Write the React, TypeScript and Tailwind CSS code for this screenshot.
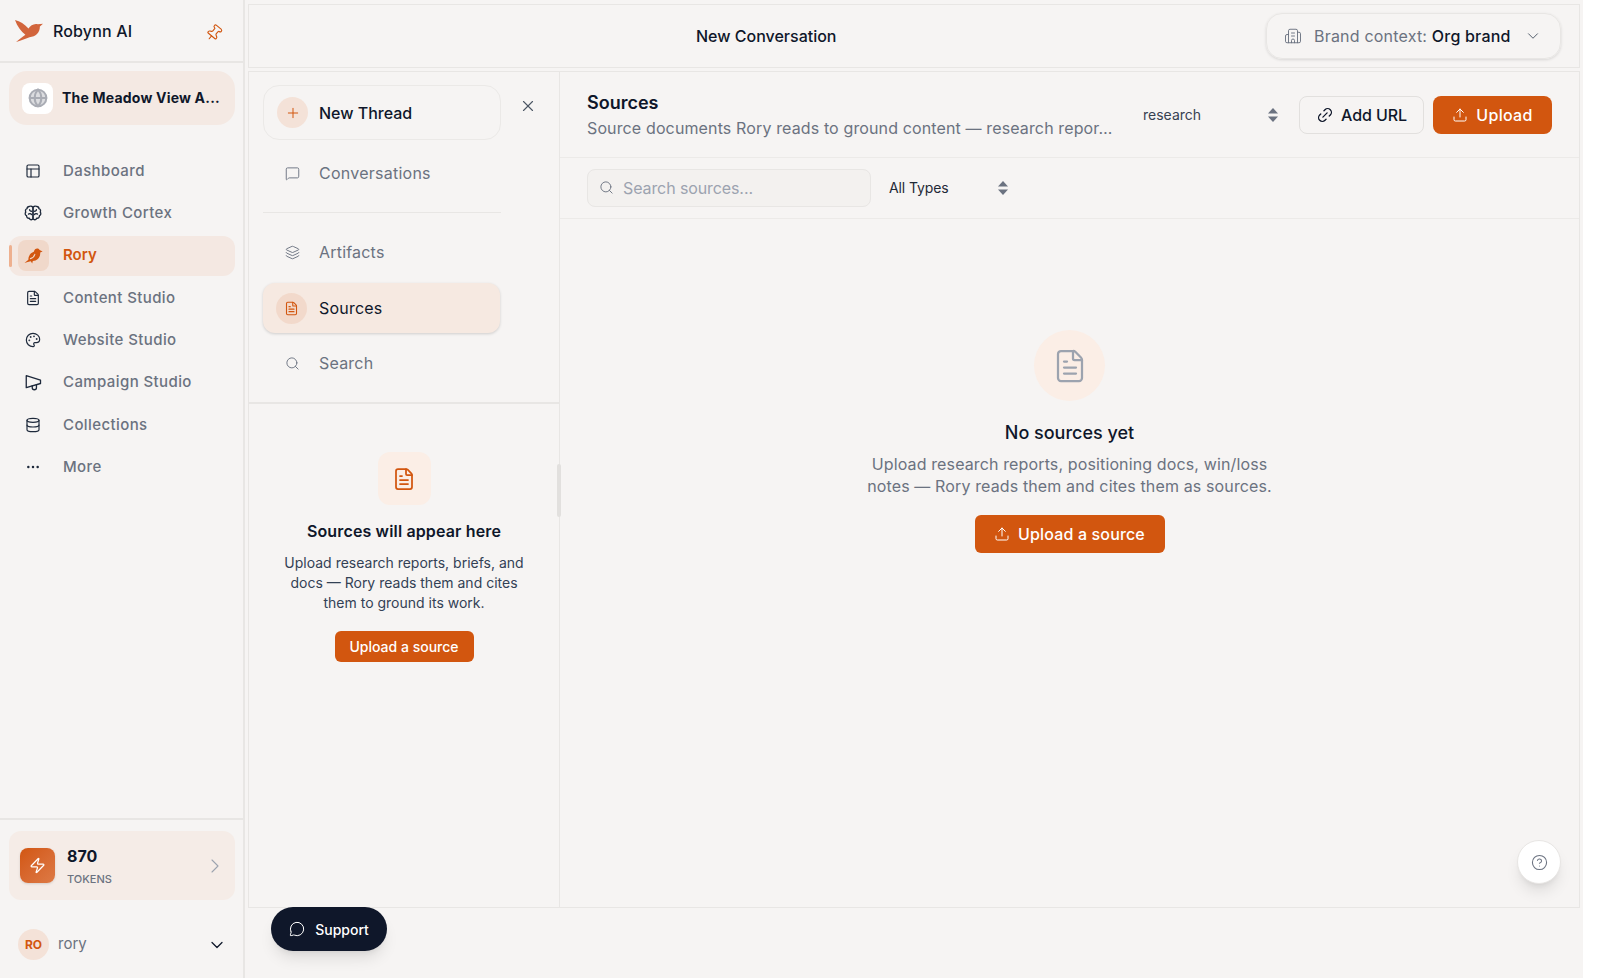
import {
  Building2,
  ChevronDown,
  ChevronRight,
  CircleHelp,
  Database,
  Ellipsis,
  FileText,
  Globe,
  Layers,
  Link2,
  MessageCircle,
  MessageSquare,
  Palette,
  PanelsTopLeft,
  Pin,
  Plus,
  Search,
  Upload,
  X,
  Zap,
} from "lucide-react";

type IconProps = { size?: number; className?: string; strokeWidth?: number };

const BrainIcon = ({ size = 18, className, strokeWidth = 1.75 }: IconProps) => (
  <svg width={size} height={size} viewBox="0 0 24 24" fill="none" stroke="currentColor" strokeWidth={strokeWidth} strokeLinecap="round" strokeLinejoin="round" className={className}>
    <path d="M9.5 3A2.5 2.5 0 0 1 12 5.5v13a2.5 2.5 0 0 1-4.96.44 3 3 0 0 1-3.6-3.3 3 3 0 0 1-1-4.9 3 3 0 0 1 1.6-4.6A3 3 0 0 1 7 3.3 2.5 2.5 0 0 1 9.5 3Z" />
    <path d="M14.5 3A2.5 2.5 0 0 0 12 5.5v13a2.5 2.5 0 0 0 4.96.44 3 3 0 0 0 3.6-3.3 3 3 0 0 0 1-4.9 3 3 0 0 0-1.6-4.6A3 3 0 0 0 17 3.3 2.5 2.5 0 0 0 14.5 3Z" />
    <path d="M7.5 7.5c0 1.4 1.2 2.3 2.5 2.2M16.5 7.5c0 1.4-1.2 2.3-2.5 2.2M6 13.5c1.2-1 3-.8 4 .5M18 13.5c-1.2-1-3-.8-4 .5" />
  </svg>
);

const MegaphoneIcon = ({ size = 18, className, strokeWidth = 1.75 }: IconProps) => (
  <svg width={size} height={size} viewBox="0 0 24 24" fill="none" stroke="currentColor" strokeWidth={strokeWidth} strokeLinecap="round" strokeLinejoin="round" className={className}>
    <path d="M22 9.5 3 3.5v16l19-5.5z" />
    <path d="M11 17v2.5a2.8 2.8 0 0 0 5.6 0V15.5" />
  </svg>
);

const RoryBird = () => (
  <svg width="19" height="17" viewBox="0 0 19 17" className="shrink-0">
    <path
      d="M0.5 16 C2 14.6 3.2 13.6 4.4 12.8 C4.2 9 6.6 5.8 9.8 4.8 C10.4 1.4 14 0.4 15.6 3 L18.6 4.4 L16.2 5.6 C16.6 10.4 13.2 14 8.8 14 L8.2 16.4 L6.8 14.2 C4.8 14.6 2.6 15.4 0.5 16 Z"
      fill="#d2560f"
    />
    <path d="M6.4 11.6 C8.4 11.2 10.2 9.6 10.8 7.4" fill="none" stroke="#f0d8ca" strokeWidth="1.1" strokeLinecap="round" />
  </svg>
);

const navItems = [
  { label: "Dashboard", icon: PanelsTopLeft },
  { label: "Growth Cortex", icon: BrainIcon },
  { label: "Rory", active: true },
  { label: "Content Studio", icon: FileText },
  { label: "Website Studio", icon: Palette },
  { label: "Campaign Studio", icon: MegaphoneIcon },
  { label: "Collections", icon: Database },
  { label: "More", icon: Ellipsis },
];

const SelectArrows = () => (
  <svg width="12" height="16" viewBox="0 0 12 16" className="shrink-0">
    <path d="M6 1 L11 6.6 H1 Z" fill="#6b7280" />
    <path d="M6 15 L11 9.4 H1 Z" fill="#6b7280" />
  </svg>
);

const Logo = () => (
  <svg width="28" height="22" viewBox="0 0 27 21" className="shrink-0">
    <path
      d="M0 0 C5 1 9 4 13 8 C15 5.5 18 3 22 4 L27 3.5 L24 6.2 C24 12 20 16 14 16.5 C10 18 5 20 1 21 C4 18.5 7 16.5 10 14.2 C6 11 2 6 0 0 Z"
      fill="#d2653c"
    />
  </svg>
);

const Sidebar = () => (
  <aside className="flex w-[245px] shrink-0 flex-col border-r-2 border-[#e8e6e4]">
    <div className="flex h-[63px] shrink-0 items-center border-b-2 border-[#e8e6e4] pl-[15px] pr-[20px]">
      <Logo />
      <span className="ml-[10px] flex-1 text-[16px] font-medium tracking-[0.15px] text-[#0f172a]">Robynn AI</span>
      <Pin size={18} className="mt-[4px] rotate-[40deg] text-[#d2560f]" strokeWidth={1.5} />
    </div>

    <div className="ml-[9px] mr-[8px] mt-[8px] flex h-[54px] items-center rounded-[18px] bg-[#f4e9e3] pl-[13px]">
      <div className="flex h-[31px] w-[31px] items-center justify-center rounded-[8px] bg-white">
        <Globe size={20} strokeWidth={2.4} className="fill-[#dcdde0] text-[#a9acb4]" />
      </div>
      <span className="ml-[9px] mb-[2px] text-[14px] font-bold tracking-[0.2px] text-[#0f172a]">The Meadow View A...</span>
    </div>

    <nav className="ml-[9px] mr-[8px] mt-[26px] flex flex-col gap-[2.3px]">
      {navItems.map(({ label, icon: Icon, active }) =>
        active || !Icon ? (
          <div key={label} className="relative flex h-[40px] items-center rounded-xl bg-[#f4e8e2] pl-[9px]">
            <span className="absolute left-0 top-[9px] h-[22px] w-[3px] rounded-full bg-[#eeb08f]" />
            <span className="flex h-[31px] w-[31px] items-center justify-center rounded-lg bg-[#f0d8ca]">
              <RoryBird />
            </span>
            <span className="ml-[14px] text-[15px] font-semibold text-[#d2560f]">{label}</span>
          </div>
        ) : (
          <div key={label} className="flex h-[40px] items-center pl-[16px]">
            <span className="flex w-[16px] items-center justify-center">
              <Icon size={label === "Growth Cortex" || label === "Campaign Studio" ? 18 : 16} className="shrink-0 text-[#1e293b]" strokeWidth={1.75} />
            </span>
            <span className="ml-[22px] text-[15px] font-medium tracking-[0.4px] text-[#6b7280]">{label}</span>
          </div>
        ),
      )}
    </nav>

    <div className="mt-auto border-t-2 border-[#e8e6e4] pl-[9px] pr-[8px] pt-[11px]">
      <div className="flex h-[69px] items-center rounded-xl bg-[#f5ece7] pl-[11px] pr-[8px]">
        <span className="flex h-[35px] w-[35px] items-center justify-center rounded-lg bg-gradient-to-br from-[#d2560f] to-[#dd7a45] shadow-sm">
          <Zap size={17} className="text-white" strokeWidth={1.75} />
        </span>
        <div className="ml-[12px] flex-1">
          <div className="text-[16px] font-bold leading-[22px] text-[#0f172a]">870</div>
          <div className="mt-[5px] text-[11px] font-medium leading-[14px] text-[#6b7280]">TOKENS</div>
        </div>
        <ChevronRight size={24} strokeWidth={1.1} className="text-[#9ca3af]" />
      </div>
      <div className="mb-[18px] mt-[29px] flex items-center pl-[9px] pr-[7px]">
        <span className="flex h-[31px] w-[31px] items-center justify-center rounded-full bg-[#f4e2d8] text-[12px] font-bold text-[#d2560f]">
          RO
        </span>
        <span className="ml-[9px] flex-1 text-[15px] text-[#6b7280]">rory</span>
        <ChevronDown size={20} strokeWidth={1.5} className="mr-[1px] text-[#0f172a]" />
      </div>
    </div>
  </aside>
);

const ThreadPanel = () => (
  <div className="relative flex w-[311px] shrink-0 flex-col border-r border-[#e8e6e4]">
    <div className="flex flex-col pl-[14px] pt-[13px]">
      <div className="flex h-[55px] w-[238px] items-center rounded-2xl border border-[#ebe9e7] pl-[13px]">
        <span className="flex h-[31px] w-[31px] items-center justify-center rounded-full bg-[#f4e2d8]">
          <Plus size={16} strokeWidth={1.5} className="text-[#d2560f]" />
        </span>
        <span className="ml-[11px] text-[16px] font-medium text-[#0f172a]">New Thread</span>
      </div>
      <div className="mt-[8px] flex h-[50px] w-[238px] items-center pl-[22px]">
        <MessageSquare size={15} strokeWidth={1.5} className="text-[#6b7280]" />
        <span className="ml-[19px] text-[16px] tracking-[0.25px] text-[#6b7280]">Conversations</span>
      </div>
      <div className="mt-[14px] h-px w-[238px] bg-[#e8e6e4]" />
      <div className="mt-[14px] flex h-[50px] w-[238px] items-center pl-[22px]">
        <Layers size={15} strokeWidth={1.5} className="text-[#6b7280]" />
        <span className="ml-[19px] text-[16px] tracking-[0.2px] text-[#6b7280]">Artifacts</span>
      </div>
      <div className="mt-[6px] flex h-[50px] w-[237px] items-center rounded-xl bg-[#f6e9e1] pl-[13px] shadow-[0_1px_3px_rgba(0,0,0,0.16)]">
        <span className="flex h-[31px] w-[31px] items-center justify-center rounded-full bg-[#f2d9cb]">
          <FileText size={15} strokeWidth={1.75} className="text-[#d2560f]" />
        </span>
        <span className="ml-[12px] text-[16px] tracking-[0.2px] text-[#0f172a]">Sources</span>
      </div>
      <div className="mt-[5px] flex h-[50px] w-[238px] items-center pl-[22px]">
        <Search size={15} strokeWidth={1.5} className="text-[#6b7280]" />
        <span className="ml-[19px] text-[16px] tracking-[0.2px] text-[#6b7280]">Search</span>
      </div>
    </div>
    <X size={18} strokeWidth={1.5} className="absolute left-[270px] top-[25px] text-[#4b5563]" />

    <div className="mt-[14px] flex flex-1 flex-col items-center border-t-2 border-[#e8e6e4] pt-[48px]">
      <span className="flex h-[53px] w-[53px] items-center justify-center rounded-xl bg-[#fbeee6]">
        <FileText size={24} strokeWidth={1.75} className="text-[#d2560f]" />
      </span>
      <h3 className="mt-[14px] text-[16px] font-semibold leading-[24px] tracking-[0.15px] text-[#0f172a]">Sources will appear here</h3>
      <p className="mt-[10px] w-[250px] text-center text-[14px] leading-[20px] text-[#334155]">
        Upload research reports, briefs, and docs — Rory reads them and cites them to ground its work.
      </p>
      <button className="mt-[18px] h-[31px] w-[139px] rounded-md bg-[#d2560f] text-[14px] font-medium text-white">
        Upload a source
      </button>
    </div>
    <span className="absolute right-[-2px] top-[392px] h-[53px] w-[4px] rounded-full bg-[#e2e0de]" />
  </div>
);

const SourcesPanel = () => (
  <section className="flex flex-1 flex-col">
    <div className="flex h-[86px] items-center border-b border-[#eceae8] pl-[27px] pr-[27px]">
      <div className="w-[535px] shrink-0 pt-[2px]">
        <h2 className="text-[18px] font-semibold leading-[24px] text-[#0f172a]">Sources</h2>
        <p className="mt-[1px] truncate text-[16px] leading-[24px] tracking-[0.13px] text-[#6b7280]">
          Source documents Rory reads to ground content — research repor…
        </p>
      </div>
      <div className="ml-[10px] flex h-[37px] w-[159px] items-center justify-between pl-[11px] pr-[12px]">
        <span className="text-[14px] text-[#374151]">research</span>
        <SelectArrows />
      </div>
      <button className="ml-[8px] flex h-[38px] w-[125px] items-center justify-center gap-[7px] rounded-lg border border-[#e2e0de] text-[16px] font-medium tracking-[-0.1px] text-[#0f172a]">
        <Link2 size={18} strokeWidth={1.75} className="rotate-[-45deg]" />
        Add URL
      </button>
      <button className="ml-[9px] flex h-[38px] w-[119px] items-center justify-center gap-[8px] rounded-lg bg-[#d2560f] text-[16px] font-medium tracking-[0.3px] text-white">
        <Upload size={16} strokeWidth={1.5} />
        Upload
      </button>
    </div>

    <div className="flex h-[61px] items-center border-b border-[#eceae8] pb-[1px] pl-[27px]">
      <div className="flex h-[38px] w-[284px] items-center rounded-lg border border-[#e8e6e4] bg-[#f3f1ef] pl-[11px]">
        <Search size={15} strokeWidth={1.5} className="text-[#6b7280]" />
        <span className="ml-[9px] text-[16px] tracking-[-0.1px] text-[#9ca3af]">Search sources...</span>
      </div>
      <div className="ml-[18px] flex w-[126px] items-center justify-between pr-[6px]">
        <span className="text-[14px] tracking-[-0.1px] text-[#1f2937]">All Types</span>
        <SelectArrows />
      </div>
    </div>

    <div className="flex flex-1 flex-col items-center pt-[111px]">
      <span className="flex h-[71px] w-[71px] items-center justify-center rounded-full bg-[#fbeee6]">
        <FileText size={36} strokeWidth={1.5} className="text-[#9ca3af]" />
      </span>
      <h3 className="mt-[18px] text-[18px] font-medium leading-[28px] text-[#0f172a]">No sources yet</h3>
      <p className="mt-[6px] w-[440px] text-center text-[16px] leading-[22px] tracking-[0.13px] text-[#6b7280]">
        Upload research reports, positioning docs, win/loss<br />notes — Rory reads them and cites them as sources.
      </p>
      <button className="mt-[18px] flex h-[38px] w-[190px] items-center justify-center gap-[8px] rounded-md bg-[#d2560f] text-[16px] font-medium tracking-[0.15px] text-white">
        <Upload size={16} strokeWidth={1.5} />
        Upload a source
      </button>
    </div>
  </section>
);

export default function App() {
  return (
    <div className="relative flex h-[978px] w-[1583px] overflow-hidden bg-[#f6f4f3] font-['Inter',sans-serif]">
      <Sidebar />
      <main className="flex flex-1 flex-col pl-[3px] pr-[4px] pt-[4px]">
        <header className="flex h-[64px] shrink-0 items-center border border-[#e8e6e4] pr-[18px]">
          <div className="flex-1 pl-[447px] text-[16px] font-medium text-[#0f172a]">New Conversation</div>
          <div className="flex h-[46px] w-[295px] items-center rounded-2xl border border-[#e8e6e4] pl-[17px] pr-[18px] shadow-[0_1px_3px_rgba(0,0,0,0.12)]">
            <Building2 size={18} strokeWidth={1.25} className="text-[#6b7280]" />
            <span className="ml-[12px] flex-1 whitespace-nowrap text-[16px] tracking-[0.2px] text-[#6b7280]">
              Brand context: <span className="font-medium text-[#0f172a]">Org brand</span>
            </span>
            <ChevronDown size={18} strokeWidth={1.25} className="text-[#4b5563]" />
          </div>
        </header>
        <div className="mt-[3px] flex h-[837px] shrink-0 border border-[#e8e6e4]">
          <ThreadPanel />
          <SourcesPanel />
        </div>
      </main>

      <button className="absolute left-[271px] top-[907px] flex h-[44px] w-[116px] items-center justify-center gap-[10px] rounded-full bg-[#0f172a] text-[14px] font-medium text-white shadow-lg">
        <MessageCircle size={16} strokeWidth={1.5} />
        Support
      </button>
      <button className="absolute left-[1517px] top-[840px] flex h-[44px] w-[44px] items-center justify-center rounded-full border border-[#e8e6e4] bg-white shadow-lg">
        <CircleHelp size={17} strokeWidth={1.5} className="text-[#6b7280]" />
      </button>
    </div>
  );
}
